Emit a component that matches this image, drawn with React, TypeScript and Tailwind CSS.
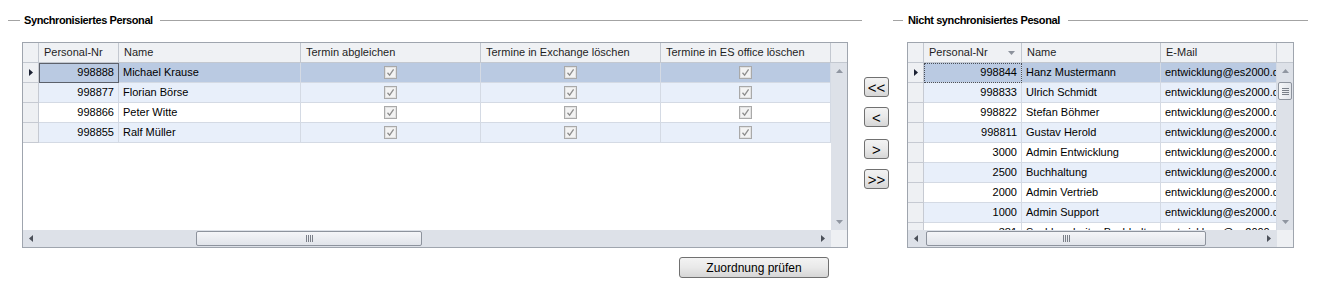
import React from "react"

type Col = { label: string; w: number; align: "left" | "right" | "center"; sort?: boolean }
type Cell = string | { check: true }

const CHECK: Cell = { check: true }

const leftCols: Col[] = [
    { label: "Personal-Nr", w: 80, align: "right" },
    { label: "Name", w: 182, align: "left" },
    { label: "Termin abgleichen", w: 180, align: "center" },
    { label: "Termine in Exchange löschen", w: 180, align: "center" },
    { label: "Termine in ES office löschen", w: 170, align: "center" },
]

const leftRows: Cell[][] = [
    ["998888", "Michael Krause", CHECK, CHECK, CHECK],
    ["998877", "Florian Börse", CHECK, CHECK, CHECK],
    ["998866", "Peter Witte", CHECK, CHECK, CHECK],
    ["998855", "Ralf Müller", CHECK, CHECK, CHECK],
]

const rightCols: Col[] = [
    { label: "Personal-Nr", w: 98, align: "right", sort: true },
    { label: "Name", w: 139, align: "left" },
    { label: "E-Mail", w: 116, align: "left" },
]

const mail = "entwicklung@es2000.de"
const rightRows: Cell[][] = [
    ["998844", "Hanz Mustermann", mail],
    ["998833", "Ulrich Schmidt", mail],
    ["998822", "Stefan Böhmer", mail],
    ["998811", "Gustav Herold", mail],
    ["3000", "Admin Entwicklung", mail],
    ["2500", "Buchhaltung", mail],
    ["2000", "Admin Vertrieb", mail],
    ["1000", "Admin Support", mail],
    ["381", "Sachbearbeiter Buchhaltung", mail],
]

function CheckBox() {
    return (
        <svg width="13" height="13" viewBox="0 0 13 13">
            <rect x="0.5" y="0.5" width="12" height="12" fill="#f3f3f3" stroke="#a9a9a9" />
            <rect x="1.5" y="1.5" width="10" height="10" fill="none" stroke="#e2e2e2" />
            <path d="M3.5 6.8 L5.6 9.2 L9.6 3.4" fill="none" stroke="#8e8e8e" strokeWidth="1.3" />
        </svg>
    )
}

function Arrow({ dir, color }: { dir: "up" | "down" | "left" | "right"; color: string }) {
    const d = {
        up: "M0 4 L3.5 0 L7 4 Z",
        down: "M0 0 L7 0 L3.5 4 Z",
        left: "M4 0 L4 7 L0 3.5 Z",
        right: "M0 0 L4 3.5 L0 7 Z",
    }[dir]
    const horiz = dir === "up" || dir === "down"
    return (
        <svg width={horiz ? 7 : 4} height={horiz ? 4 : 7} viewBox={horiz ? "0 0 7 4" : "0 0 4 7"}>
            <path d={d} fill={color} />
        </svg>
    )
}

function Grid({
    cols,
    rows,
    focus,
    hThumbLeft,
    hThumbWidth,
    vThumb,
}: {
    cols: Col[]
    rows: Cell[][]
    focus: "solid" | "dotted"
    hThumbLeft: number
    hThumbWidth: number
    vThumb?: boolean
}) {
    return (
        <div className="flex flex-col h-[206px] border border-[#9fa5ae] bg-white">
            {/* header */}
            <div className="flex h-[20px] shrink-0 bg-[#eff1f4] border-b border-[#c3c8d0] text-[#1e1e1e]">
                <div className="w-[16px] shrink-0 border-r border-[#c3c8d0]" />
                {cols.map((c) => (
                    <div
                        key={c.label}
                        style={{ width: c.w }}
                        className="shrink-0 flex items-center pl-[5px] pr-[6px] border-r border-[#c3c8d0] whitespace-nowrap overflow-hidden"
                    >
                        <span className="flex-1">{c.label}</span>
                        {c.sort && <Arrow dir="down" color="#8c929c" />}
                    </div>
                ))}
                <div className="flex-1" />
            </div>

            {/* body */}
            <div className="flex flex-1 min-h-0">
                <div className="flex-1 overflow-hidden">
                    {rows.map((r, i) => {
                        const bg = i === 0 ? "bg-[#bacae2]" : i % 2 === 1 ? "bg-[#e8effa]" : "bg-white"
                        return (
                            <div key={i} className="flex h-[20px]">
                                <div className="w-[16px] shrink-0 flex items-center pl-[6px] bg-[#eef0f3] border-r border-b border-[#c6cad2]">
                                    {i === 0 && <Arrow dir="right" color="#1c2233" />}
                                </div>
                                {r.map((cell, j) => {
                                    const c = cols[j]
                                    const isFocus = i === 0 && j === 0
                                    const focusCls = isFocus
                                        ? focus === "solid"
                                            ? "outline-1 outline-[#5c616b] -outline-offset-1"
                                            : "outline-1 outline-dotted outline-[#4a4f58] -outline-offset-1"
                                        : ""
                                    const justify =
                                        c.align === "right" ? "justify-end" : c.align === "center" ? "justify-center" : "justify-start"
                                    return (
                                        <div
                                            key={j}
                                            style={{ width: c.w }}
                                            className={`shrink-0 flex items-center ${justify} px-[4px] border-r border-b border-[#d4dae4] whitespace-nowrap overflow-hidden ${bg} ${focusCls}`}
                                        >
                                            {typeof cell === "string" ? cell : <CheckBox />}
                                        </div>
                                    )
                                })}
                            </div>
                        )
                    })}
                </div>
                <div className="w-[16px] shrink-0 flex flex-col bg-[#dde1e8]">
                    <div className="h-[16px] flex items-center justify-center">
                        <Arrow dir="up" color="#9096a1" />
                    </div>
                    {vThumb && (
                        <div className="mt-[3px] mx-[1px] h-[18px] rounded-[2px] border border-[#8d939d] bg-gradient-to-r from-[#f5f6f8] to-[#e2e5ea] flex flex-col items-center justify-center gap-[1px]">
                            <div className="w-[7px] h-px bg-[#7a7f88]" />
                            <div className="w-[7px] h-px bg-[#7a7f88]" />
                            <div className="w-[7px] h-px bg-[#7a7f88]" />
                            <div className="w-[7px] h-px bg-[#7a7f88]" />
                        </div>
                    )}
                    <div className="mt-auto h-[16px] flex items-center justify-center">
                        <Arrow dir="down" color="#9096a1" />
                    </div>
                </div>
            </div>

            {/* horizontal scrollbar */}
            <div className="flex h-[17px] shrink-0">
                <div className="flex-1 flex items-center bg-[#dde1e8]">
                    <div className="w-[16px] shrink-0 flex items-center justify-center">
                        <Arrow dir="left" color="#4b5059" />
                    </div>
                    <div
                        style={{ marginLeft: hThumbLeft, width: hThumbWidth }}
                        className="h-[15px] shrink-0 rounded-[2px] border border-[#8d939d] bg-gradient-to-b from-[#f4f5f8] to-[#e1e4ea] flex items-center justify-center gap-[1px]"
                    >
                        <div className="w-px h-[7px] bg-[#7a7f88]" />
                        <div className="w-px h-[7px] bg-[#7a7f88]" />
                        <div className="w-px h-[7px] bg-[#7a7f88]" />
                        <div className="w-px h-[7px] bg-[#7a7f88]" />
                    </div>
                    <div className="ml-auto w-[16px] shrink-0 flex items-center justify-center">
                        <Arrow dir="right" color="#4b5059" />
                    </div>
                </div>
                <div className="w-[16px] shrink-0 bg-[#eef0f3]" />
            </div>
        </div>
    )
}

function MoveButton({ label, className }: { label: string; className?: string }) {
    return (
        <button
            className={`w-[25px] h-[20px] flex items-center justify-center rounded-[3px] border border-[#707070] bg-gradient-to-b from-[#f3f3f3] via-[#e9e9e9] to-[#d6d6d6] text-[15px] leading-none text-black ${className ?? ""}`}
        >
            {label}
        </button>
    )
}

export default function App() {
    return (
        <div className="w-[1317px] h-[289px] bg-white overflow-hidden text-[11px] text-black font-['Liberation_Sans',Arial,sans-serif]">
            {/* group titles */}
            <div className="flex items-center h-[16px] mt-[12px]">
                <div className="ml-[8px] w-[854px] flex items-center">
                    <div className="w-[12px] h-px bg-[#a3a3a3]" />
                    <span className="ml-[4px] font-bold tracking-[-0.4px]">Synchronisiertes Personal</span>
                    <div className="ml-[7px] flex-1 h-px bg-[#a3a3a3]" />
                </div>
                <div className="ml-[31px] w-[415px] flex items-center">
                    <div className="w-[10px] h-px bg-[#a3a3a3]" />
                    <span className="ml-[5px] font-bold tracking-[-0.4px]">Nicht synchronisiertes Pesonal</span>
                    <div className="ml-[8px] flex-1 h-px bg-[#a3a3a3]" />
                </div>
            </div>

            <div className="flex items-start mt-[14px]">
                {/* synchronised */}
                <div className="ml-[22px] w-[826px] flex flex-col">
                    <Grid cols={leftCols} rows={leftRows} focus="solid" hThumbLeft={157} hThumbWidth={226} />
                    <div className="flex justify-end pr-[19px] mt-[9px]">
                        <button className="w-[150px] h-[21px] rounded-[3px] border border-[#707070] bg-gradient-to-b from-[#f3f3f3] via-[#e9e9e9] to-[#d6d6d6] text-[12px] text-black">
                            Zuordnung prüfen
                        </button>
                    </div>
                </div>

                {/* move buttons */}
                <div className="ml-[16px] mt-[35px] flex flex-col">
                    <MoveButton label="<<" />
                    <MoveButton label="<" className="mt-[10px]" />
                    <MoveButton label=">" className="mt-[12px]" />
                    <MoveButton label=">>" className="mt-[10px]" />
                </div>

                {/* not synchronised */}
                <div className="ml-[18px] w-[387px]">
                    <Grid cols={rightCols} rows={rightRows} focus="dotted" hThumbLeft={2} hThumbWidth={280} vThumb />
                </div>
            </div>
        </div>
    )
}
